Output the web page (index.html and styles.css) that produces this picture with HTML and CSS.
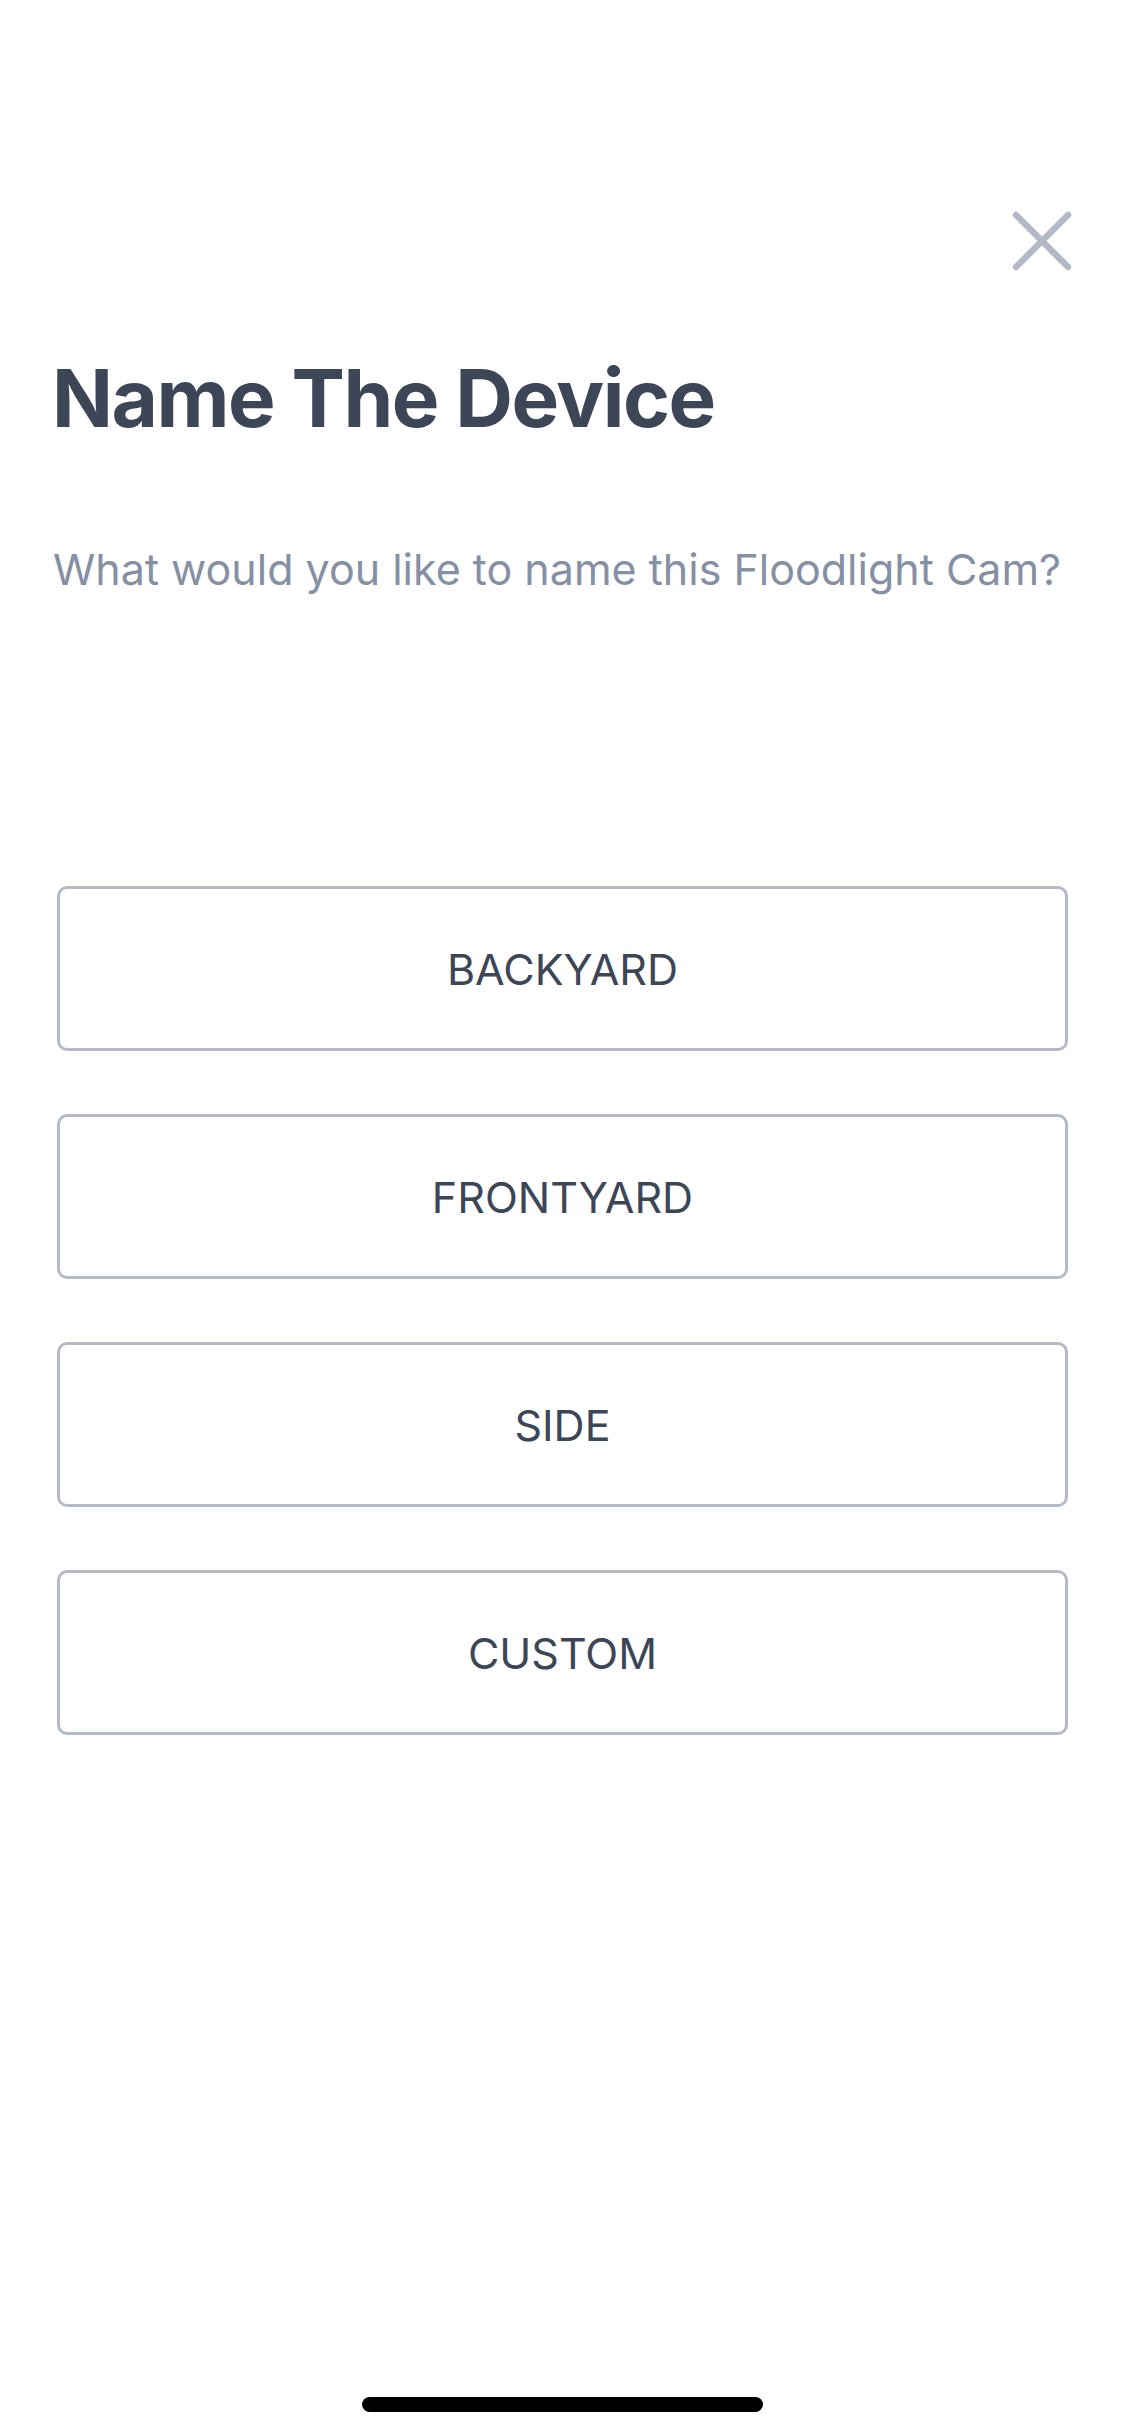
FILE: index.html
```html
<!DOCTYPE html>
<html lang="en">
<head>
<meta charset="utf-8">
<title>Name The Device</title>
<link rel="stylesheet" href="styles.css">
</head>
<body>
<div class="screen">
  <header class="top-bar">
    <button class="close" aria-label="Close">
      <svg width="70" height="70" viewBox="0 0 70 70">
        <path d="M9 9 L61 61 M61 9 L9 61" stroke="#b3bac5" stroke-width="6.5" stroke-linecap="round" fill="none"/>
      </svg>
    </button>
  </header>
  <main class="content">
    <h1 class="title">Name The Device</h1>
    <p class="subtitle">What would you like to name this Floodlight Cam?</p>
    <div class="options">
      <button class="option">BACKYARD</button>
      <button class="option">FRONTYARD</button>
      <button class="option">SIDE</button>
      <button class="option">CUSTOM</button>
    </div>
  </main>
  <div class="home-area"><div class="home-indicator"></div></div>
</div>
</body>
</html>
```
FILE: styles.css
```css
* { box-sizing: border-box; }
html, body {
  margin: 0;
  padding: 0;
  background: #ffffff;
}
body {
  font-family: Inter, "Noto Sans", "Liberation Sans", sans-serif;
  color: #3d4656;
}
.screen {
  width: 1125px;
  min-height: 2436px;
  display: flex;
  flex-direction: column;
}
.top-bar {
  display: flex;
  justify-content: flex-end;
  padding: 206px 48px 0 0;
}
.close {
  width: 70px;
  height: 70px;
  padding: 0;
  margin: 0;
  border: 0;
  background: transparent;
  display: block;
}
.close svg { display: block; }
.content {
  padding: 74px 57px 0 57px;
}
.title {
  margin: 0 0 0 -5px;
  font-size: 80px;
  line-height: 96px;
  font-weight: 700;
  letter-spacing: -1.5px;
  color: #3d4656;
}
.subtitle {
  margin: 97px 0 0 -4px;
  font-size: 43px;
  line-height: 52px;
  font-weight: 400;
  color: #8690a4;
}
.options {
  margin-top: 291px;
  display: flex;
  flex-direction: column;
  gap: 63px;
}
.option {
  display: flex;
  align-items: center;
  justify-content: center;
  width: 100%;
  height: 165px;
  border: 3px solid #b4bbc6;
  border-radius: 10px;
  background: #ffffff;
  font-family: Inter, "Noto Sans", "Liberation Sans", sans-serif;
  font-size: 43px;
  font-weight: 400;
  color: #3d4656;
  padding: 0;
}
.home-area {
  margin-top: auto;
  display: flex;
  justify-content: center;
  padding-bottom: 24px;
}
.home-indicator {
  width: 401px;
  height: 15px;
  border-radius: 8px;
  background: #000000;
}
```
